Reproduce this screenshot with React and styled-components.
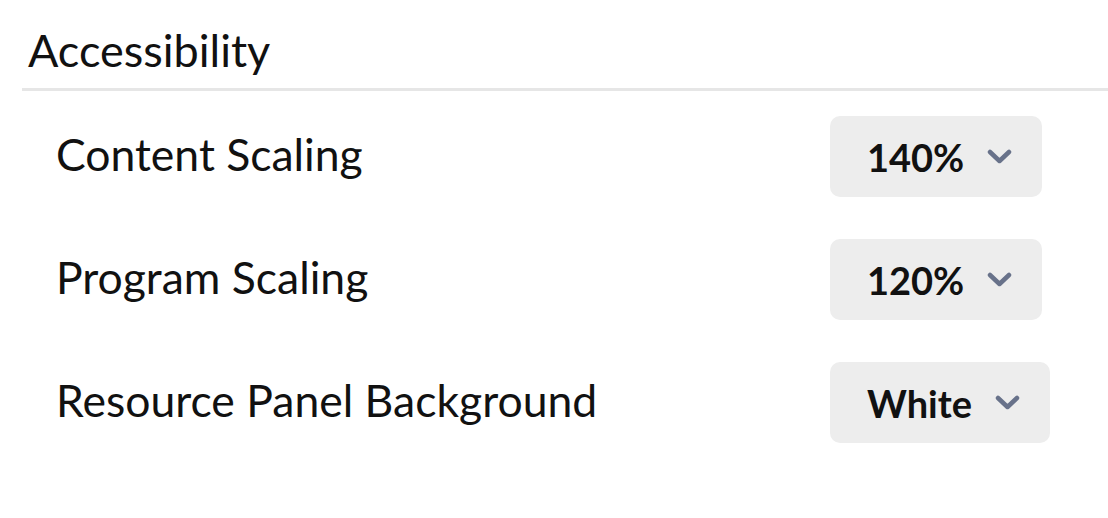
import React from "react";
import { styled, createGlobalStyle } from "styled-components";

const GlobalStyle = createGlobalStyle`
  body {
    margin: 0;
    background: #ffffff;
    font-family: Lato, "Noto Sans", sans-serif;
    color: #111111;
  }
`;

const Panel = styled.section`
  padding-left: 22px;
  padding-top: 23px;
`;

const Heading = styled.h2`
  margin: 0;
  padding: 0 0 10px 6px;
  font-size: 45px;
  line-height: 55px;
  font-weight: 400;
  border-bottom: 3px solid #e6e6e6;
`;

const Rows = styled.div`
  display: flex;
  flex-direction: column;
  gap: 42px;
  padding: 25px 0 0 34px;
`;

const Row = styled.div`
  display: grid;
  grid-template-columns: 1fr 278px;
  align-items: center;
  height: 81px;
`;

const Label = styled.span`
  font-size: 44.5px;
  line-height: 1;
  margin-bottom: 4px;
`;

const Select = styled.button`
  justify-self: start;
  display: inline-flex;
  align-items: center;
  gap: 23px;
  height: 81px;
  padding: 0 30px 0 37px;
  border: none;
  border-radius: 10px;
  background: #ededed;
  font-family: inherit;
  font-size: 38px;
  font-weight: 700;
  color: #111111;
`;

const Chevron = () => (
  <svg width="25" height="15" viewBox="0 0 25 15">
    <path
      d="M3 3 L12.5 12 L22 3"
      fill="none"
      stroke="#68728a"
      strokeWidth="4.5"
      strokeLinecap="round"
      strokeLinejoin="round"
    />
  </svg>
);

const settings = [
  { label: "Content Scaling", value: "140%" },
  { label: "Program Scaling", value: "120%" },
  { label: "Resource Panel Background", value: "White" },
];

const App = () => {
  return (
    <>
      <GlobalStyle />
      <Panel>
        <Heading>Accessibility</Heading>
        <Rows>
          {settings.map((s) => (
            <Row key={s.label}>
              <Label>{s.label}</Label>
              <Select>
                {s.value}
                <Chevron />
              </Select>
            </Row>
          ))}
        </Rows>
      </Panel>
    </>
  );
};

export default App;
